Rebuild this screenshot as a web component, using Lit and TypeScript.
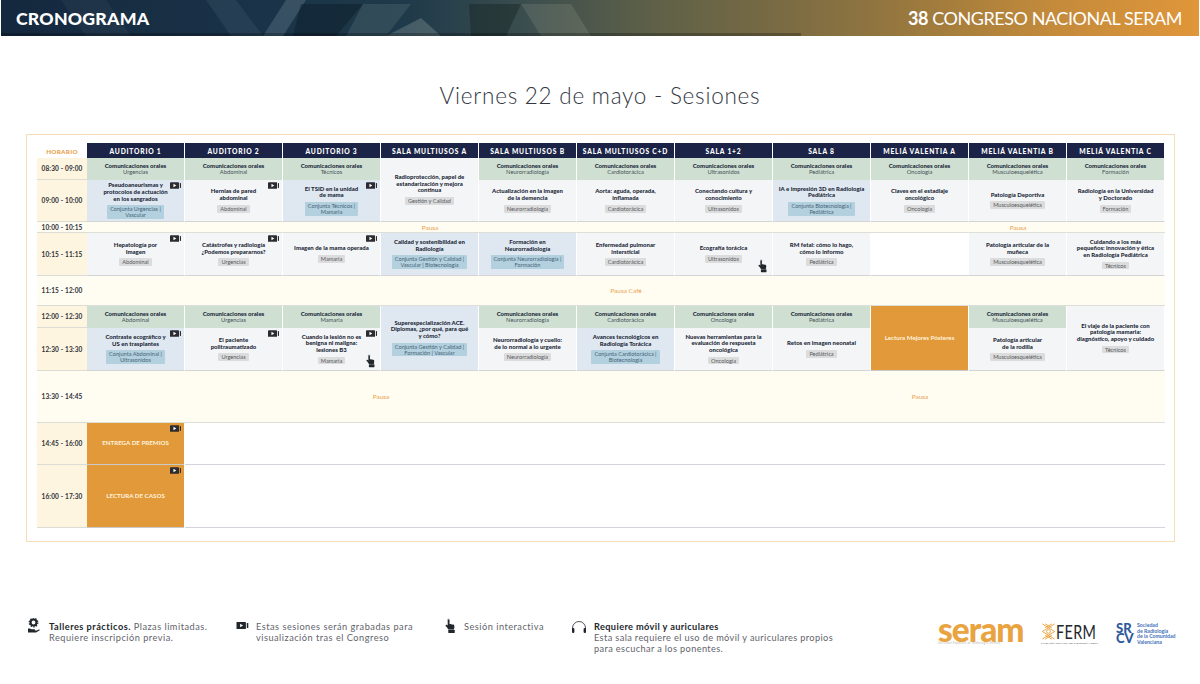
import { LitElement, html, css, svg } from "lit";
import { customElement } from "lit/decorators.js";

type Kind = "oral" | "blue" | "grey" | "orange" | "pause" | "empty";
interface Cell { c: number; r: number; cs?: number; rs?: number; k: Kind; t?: string; s?: string; cam?: boolean; hand?: boolean; }

const rooms = ["AUDITORIO 1","AUDITORIO 2","AUDITORIO 3","SALA MULTIUSOS A","SALA MULTIUSOS B","SALA MULTIUSOS C+D","SALA 1+2","SALA 8","MELIÁ VALENTIA A","MELIÁ VALENTIA B","MELIÁ VALENTIA C"];
const times = [
  ["08:30 - 09:00", 0],["09:00 - 10:00", 0],["10:00 - 10:15", 1],["10:15 - 11:15", 0],["11:15 - 12:00", 1],
  ["12:00 - 12:30", 0],["12:30 - 13:30", 0],["13:30 - 14:45", 1],["14:45 - 16:00", 0],["16:00 - 17:30", 0],
] as [string, number][];

const oral = (c: number, r: number, s: string): Cell => ({ c, r, k: "oral", t: "Comunicaciones orales", s });

const cells: Cell[] = [
  oral(1,1,"Urgencias"),oral(2,1,"Abdominal"),oral(3,1,"Técnicos"),
  {c:4,r:1,rs:2,k:"grey",t:"Radioprotección, papel de\nestandarización y mejora\ncontinua",s:"Gestión y Calidad"},
  oral(5,1,"Neurorradiología"),oral(6,1,"Cardiotorácica"),oral(7,1,"Ultrasonidos"),oral(8,1,"Pediátrica"),oral(9,1,"Oncología"),oral(10,1,"Musculoesquelética"),oral(11,1,"Formación"),
  {c:1,r:2,k:"blue",t:"Pseudoaneurismas y\nprotocolos de actuación\nen los sangrados",s:"Conjunta Urgencias |\nVascular",cam:true},
  {c:2,r:2,k:"grey",t:"Hernias de pared\nabdominal",s:"Abdominal",cam:true},
  {c:3,r:2,k:"blue",t:"El TSID en la unidad\nde mama",s:"Conjunta Técnicos |\nMamaria",cam:true},
  {c:5,r:2,k:"grey",t:"Actualización en la imagen\nde la demencia",s:"Neurorradiología"},
  {c:6,r:2,k:"grey",t:"Aorta: aguda, operada,\ninflamada",s:"Cardiotorácica"},
  {c:7,r:2,k:"grey",t:"Conectando cultura y\nconocimiento",s:"Ultrasonidos"},
  {c:8,r:2,k:"blue",t:"IA e impresión 3D en Radiología\nPediátrica",s:"Conjunta Biotecnología |\nPediátrica"},
  {c:9,r:2,k:"grey",t:"Claves en el estadiaje\noncológico",s:"Oncología"},
  {c:10,r:2,k:"grey",t:"Patología Deportiva",s:"Musculoesquelética"},
  {c:11,r:2,k:"grey",t:"Radiología en la Universidad\ny Doctorado",s:"Formación"},
  {c:1,r:3,cs:7,k:"pause",t:"Pausa"},
  {c:8,r:3,k:"pause"},
  {c:9,r:3,cs:3,k:"pause",t:"Pausa"},
  {c:1,r:4,k:"grey",t:"Hepatología por\nImagen",s:"Abdominal",cam:true},
  {c:2,r:4,k:"grey",t:"Catástrofes y radiología\n¿Podemos prepararnos?",s:"Urgencias",cam:true},
  {c:3,r:4,k:"grey",t:"Imagen de la mama operada",s:"Mamaria",cam:true},
  {c:4,r:4,k:"blue",t:"Calidad y sostenibilidad en\nRadiología",s:"Conjunta Gestión y Calidad |\nVascular | Biotecnología"},
  {c:5,r:4,k:"blue",t:"Formación en\nNeurorradiología",s:"Conjunta Neurorradiología |\nFormación"},
  {c:6,r:4,k:"grey",t:"Enfermedad pulmonar\nintersticial",s:"Cardiotorácica"},
  {c:7,r:4,k:"grey",t:"Ecografía torácica",s:"Ultrasonidos",hand:true},
  {c:8,r:4,k:"grey",t:"RM fetal: cómo lo hago,\ncómo lo informo",s:"Pediátrica"},
  {c:9,r:4,k:"empty"},
  {c:10,r:4,k:"grey",t:"Patología articular de la\nmuñeca",s:"Musculoesquelética"},
  {c:11,r:4,k:"grey",t:"Cuidando a los más\npequeños: innovación y ética\nen Radiología Pediátrica",s:"Técnicos"},
  {c:1,r:5,cs:11,k:"pause",t:"Pausa Café"},
  oral(1,6,"Abdominal"),oral(2,6,"Urgencias"),oral(3,6,"Mamaria"),
  {c:4,r:6,rs:2,k:"blue",t:"Superespecialización ACE.\nDiplomas, ¿por qué, para qué\ny cómo?",s:"Conjunta Gestión y Calidad |\nFormación | Vascular"},
  oral(5,6,"Neurorradiología"),oral(6,6,"Cardiotorácica"),oral(7,6,"Oncología"),oral(8,6,"Pediátrica"),
  {c:9,r:6,rs:2,k:"orange",t:"Lectura Mejores Pósteres"},
  oral(10,6,"Musculoesquelética"),
  {c:11,r:6,rs:2,k:"grey",t:"El viaje de la paciente con\npatología mamaria:\ndiagnóstico, apoyo y cuidado",s:"Técnicos"},
  {c:1,r:7,k:"blue",t:"Contraste ecográfico y\nUS en trasplantes",s:"Conjunta Abdominal |\nUltrasonidos",cam:true},
  {c:2,r:7,k:"grey",t:"El paciente\npolitraumatizado",s:"Urgencias",cam:true},
  {c:3,r:7,k:"grey",t:"Cuando la lesión no es\nbenigna ni maligna:\nlesiones B3",s:"Mamaria",cam:true,hand:true},
  {c:5,r:7,k:"grey",t:"Neurorradiología y cuello:\nde lo normal a lo urgente",s:"Neurorradiología"},
  {c:6,r:7,k:"blue",t:"Avances tecnológicos en\nRadiología Torácica",s:"Conjunta Cardiotorácica |\nBiotecnología"},
  {c:7,r:7,k:"grey",t:"Nuevas herramientas para la\nevaluación de respuesta\noncológica",s:"Oncología"},
  {c:8,r:7,k:"grey",t:"Retos en imagen neonatal",s:"Pediátrica"},
  {c:10,r:7,k:"grey",t:"Patología articular\nde la rodilla",s:"Musculoesquelética"},
  {c:1,r:8,cs:6,k:"pause",t:"Pausa"},
  {c:7,r:8,cs:5,k:"pause",t:"Pausa"},
  {c:1,r:9,k:"orange",t:"ENTREGA DE PREMIOS",cam:true},
  {c:2,r:9,cs:10,k:"empty"},
  {c:1,r:10,k:"orange",t:"LECTURA DE CASOS",cam:true},
  {c:2,r:10,cs:10,k:"empty"},
];

const camIcon = html`<svg class="camsvg" viewBox="0 0 12 7"><rect x="0" y="0" width="9.4" height="7" rx=".5" fill="#2b2b30"/><path d="M3.6 1.7 6.6 3.5 3.6 5.3Z" fill="#fff"/><rect x="10.3" y="1" width="1.5" height="5" fill="#2b2b30"/></svg>`;
const handPaths = svg`<circle cx="3.6" cy="1.7" r="1.5" fill="#c9ccd2"/><path d="M2.700 2.200c0-1 1.800-1 1.800 0v4.100c.5-.5 1.300-.4 1.600.1.500-.4 1.300-.3 1.600.3.600-.4 1.500-.1 1.600.7.200 1.200.1 2.800-.4 4H3.300C2.700 10 1.400 8.900.7 8 .2 7.300 1 6.300 1.900 6.800l.8.6Z" fill="#22272e"/><rect x="3.300" y="11.700" width="6.400" height="3.300" rx=".6" fill="#22272e"/>`;
const handIcon = html`<svg class="handsvg" viewBox="0 0 12 16">${handPaths}</svg>`;

@customElement("app-root")
export class AppRoot extends LitElement {
  static styles = css`
    :host { display: flex; flex-direction: column; width: 1200px; height: 684px; background: #fff; font-family: "Lato", "Noto Sans", sans-serif; color: #232a36; overflow: hidden; }
    .bar { position: relative; flex: none; height: 36px; margin: 0 1px; display: flex; align-items: center; justify-content: space-between; padding: 0 17px 0 15px; color: #fff; overflow: hidden;
      background: linear-gradient(90deg, #14283e 0%, #1a3348 22%, #1f3a4a 34%, #3c4e4e 44%, #5d6048 54%, #776a44 64%, #8d7340 72%, #a87f3c 80%, #c48b3b 88%, #e0963a 100%); }
    .shapes { position: absolute; inset: 0; width: 100%; height: 100%; }
    .bar span { position: relative; }
    .brand { font-size: 17.700px; font-weight: 900; letter-spacing: .2px; }
    .congress { font-size: 18px; font-weight: 400; letter-spacing: -.45px; }
    .congress b { font-weight: 700; }
    h1 { flex: none; margin: 0; height: 98px; padding-top: 47px; box-sizing: border-box; text-align: center; font-size: 22.500px; line-height: 26px; font-weight: 300; letter-spacing: .75px; color: #33383f; }
    .frame { flex: none; box-sizing: border-box; height: 408px; margin-left: 26px; width: 1149px; border: 1px solid #f6dcb8; padding: 8px 10px 0; }
    .grid { display: grid; grid-template-columns: 50px repeat(11, 98px); grid-template-rows: 15px 22px 42px 11px 43px 30px 22px 43px 52px 42px 63px; }
    .horario { display: flex; align-items: center; justify-content: center; font-size: 6.300px; font-weight: 900; color: #e9a04a; letter-spacing: .3px; padding-top: 1px; }
    .room { display: flex; align-items: center; justify-content: center; background: #1b2447; color: #fff; font-size: 6.700px; font-weight: 900; letter-spacing: .8px; margin-right: 1px; white-space: nowrap; }
    .time { display: flex; align-items: center; justify-content: center; font-size: 6.500px; font-weight: 700; color: #2d3138; background: #fdf5e0; border-bottom: 1px solid #dcdcd6; box-sizing: border-box; letter-spacing: .15px; }
    .time.light { background: #fffcf2; }
    .cell { position: relative; box-sizing: border-box; display: flex; flex-direction: column; align-items: center; justify-content: center; text-align: center; border-right: 1px solid #fff; min-width: 0; }
    .title { font-size: 6px; line-height: 6.700px; font-weight: 900; white-space: pre-line; color: #232a3a; }
    .tag { margin-top: 3px; padding: 1px 3px; font-size: 5.600px; line-height: 5.800px; white-space: pre-line; border-radius: 1px; background: #dcdcdc; color: #555a60; }
    .oral { background: #cfe0d3; }
    .oral .title { line-height: 6.500px; }
    .oral .sub { font-size: 5.800px; line-height: 6.500px; color: #465058; }
    .blue { background: #dfe8f1; border-bottom: 1px solid #d2d4d6; }
    .blue .tag { background: #b3d0de; color: #466478; }
    .grey { background: #f4f5f6; border-bottom: 1px solid #d2d4d6; }
    .orange { background: #e2993a; border-bottom: 1px solid #c9c9c9; border-right: none; margin-right: 1px; }
    .orange .title { color: #fff3dc; font-size: 6.200px; font-weight: 700; }
    .pause { background: #fffcf2; border-right: none; border-bottom: 1px solid #dedfd8; font-size: 6.500px; color: #eba24d; }
    .empty { background: #fff; border-right: none; border-bottom: 1px solid #d3d5dc; }
    .cam { position: absolute; top: 1.500px; right: 3px; line-height: 0; }
    .camsvg { width: 11.500px; height: 7px; display: block; }
    .hand { position: absolute; right: 4px; bottom: 2.500px; line-height: 0; }
    .handsvg { width: 10.500px; height: 14px; display: block; }
    .legend { flex: none; display: flex; margin-top: 76px; padding-left: 27px; font-size: 9.200px; line-height: 11px; letter-spacing: .5px; color: #5f646b; }
    .item { flex: none; display: flex; align-items: flex-start; }
    .i1 { width: 209px; } .i2 { width: 209px; } .i3 { width: 126px; } .i4 { width: 367px; letter-spacing: .38px; }
    .ico { flex: none; display: flex; justify-content: flex-start; }
    .item b { color: #22262c; font-weight: 700; }
    .i1 .ico { width: 22px; } .i2 .ico { width: 20px; padding-top: 4px; } .i3 .ico { width: 19px; } .i4 .ico { width: 23px; padding-top: 3px; }
    .txt { padding-top: 2.500px; white-space: pre-line; }
    .logos { display: flex; align-items: flex-start; letter-spacing: 0; }
    .seram { width: 103px; color: #e9a33f; height: 28px; position: relative; }
    .seram .big { font-size: 33.500px; line-height: 20px; height: 22px; font-weight: 900; letter-spacing: -1px; margin-top: 1px; }
    .micro { font-size: 2.800px; line-height: 3px; letter-spacing: .1px; color: #b9b3a6; white-space: nowrap; }
    .seram .micro { letter-spacing: .33px; margin-top: 1px; }
    .ferm { width: 75px; display: flex; flex-wrap: wrap; margin-top: 5px; }
    .ferm svg { flex: none; }
    .ferm .big { width: 41px; font-size: 20px; line-height: 17px; font-weight: 400; letter-spacing: .5px; color: #23262b; transform: scaleX(.72); transform-origin: left center; white-space: nowrap; }
    .ferm .micro { width: 56px; color: #555; margin-top: 2px; font-size: 2.300px; }
    .srcv { display: flex; gap: 4px; color: #2c5a9c; margin-top: 5px; }
    .srcv .mark { font-size: 13px; line-height: 10px; font-weight: 900; letter-spacing: 0; width: 17px; }
    .srcv .name { font-size: 5.200px; line-height: 5.600px; font-weight: 700; letter-spacing: 0; white-space: pre-line; color: #3f72b8; }
  `;

  private cell(c: Cell) {
    const place = `grid-column:${c.c + 1} / span ${c.cs ?? 1};grid-row:${c.r + 1} / span ${c.rs ?? 1}`;
    if (c.k === "pause") return html`<div class="cell pause" style=${place}>${c.t}</div>`;
    if (c.k === "empty") return html`<div class="cell empty" style=${place}></div>`;
    if (c.k === "oral") return html`<div class="cell oral" style=${place}><div class="title">${c.t}</div><div class="sub">${c.s}</div></div>`;
    return html`<div class="cell ${c.k}" style=${place}>
      <div class="title">${c.t}</div>
      ${c.s ? html`<div class="tag">${c.s}</div>` : ""}
      ${c.cam ? html`<div class="cam">${camIcon}</div>` : ""}
      ${c.hand ? html`<div class="hand">${handIcon}</div>` : ""}
    </div>`;
  }

  render() {
    return html`
      <header class="bar">
        <svg class="shapes" viewBox="0 0 1198 36" preserveAspectRatio="none">
          ${svg`<path d="M60 0 85 36H130L105 0Z" fill="#fff" opacity=".04"/>
          <path d="M205 0 230 36H262L235 0Z" fill="#8fb0c4" opacity=".1"/>
          <path d="M262 36 285 0H305L282 36Z" fill="#9ab4c0" opacity=".22"/>
          <path d="M300 4H362L335 36H292Z" fill="#0b1a26" opacity=".45"/>
          <path d="M362 4 345 36H385L410 4Z" fill="#a9bcb8" opacity=".14"/>
          <path d="M468 4H520L505 36H470Z" fill="#14201f" opacity=".4"/>
          <path d="M385 36 420 18 440 36Z" fill="#cfd6cc" opacity=".22"/>
          <path d="M520 4H570L590 36H540Z" fill="#e2dfc8" opacity=".12"/>
          <path d="M0 33H800V36H0Z" fill="#000" opacity=".25"/>`}
        </svg>
        <span class="brand">CRONOGRAMA</span>
        <span class="congress"><b>38</b> CONGRESO NACIONAL SERAM</span>
      </header>
      <h1>Viernes 22 de mayo - Sesiones</h1>
      <section class="frame">
        <div class="grid">
          <div class="horario">HORARIO</div>
          ${rooms.map(r => html`<div class="room">${r}</div>`)}
          ${times.map((t, i) => html`<div class="time ${t[1] ? "light" : ""}" style="grid-column:1;grid-row:${i + 2}">${t[0]}</div>`)}
          ${cells.map(c => this.cell(c))}
        </div>
      </section>
      <footer class="legend">
        <div class="item i1">
          <span class="ico"><svg width="13" height="16" viewBox="0 0 13 16">
            <circle cx="6.500" cy="4.500" r="2.900" fill="none" stroke="#22272e" stroke-width="2"/>
            <circle cx="6.500" cy="4.500" r="4.300" fill="none" stroke="#22272e" stroke-width="1.200" stroke-dasharray="1.500 1.200"/>
            <path d="M1 10.500h1.800l1.700.8h3c1 0 1 1.400 0 1.400H5.800l3.900-.2 2-1c.9-.3 1.300.6.700 1.100L9 14.600H1Z" fill="#22272e"/>
          </svg></span>
          <div class="txt"><b>Talleres prácticos.</b> Plazas limitadas.
Requiere inscripción previa.</div>
        </div>
        <div class="item i2">
          <span class="ico"><svg width="13" height="7" viewBox="0 0 12 7"><rect width="9.400" height="7" rx=".5" fill="#22272e"/><path d="M3.600 1.700 6.600 3.500 3.600 5.300Z" fill="#fff"/><rect x="10.300" y="1" width="1.500" height="5" fill="#22272e"/></svg></span>
          <div class="txt">Estas sesiones serán grabadas para
visualización tras el Congreso</div>
        </div>
        <div class="item i3">
          <span class="ico"><svg width="12" height="16" viewBox="0 0 12 16">${handPaths}</svg></span>
          <div class="txt">Sesión interactiva</div>
        </div>
        <div class="item i4">
          <span class="ico"><svg width="16" height="12" viewBox="0 0 16 12"><path d="M1.500 8V7a6.500 6.500 0 0 1 13 0v1" fill="none" stroke="#22272e" stroke-width=".8"/><rect x="1" y="7" width="2.400" height="5" rx="1" fill="#22272e"/><rect x="12.600" y="7" width="2.400" height="5" rx="1" fill="#22272e"/></svg></span>
          <div class="txt"><b>Requiere móvil y auriculares</b>
Esta sala requiere el uso de móvil y auriculares propios
para escuchar a los ponentes.</div>
        </div>
        <div class="logos">
          <div class="seram"><div class="big">seram</div><div class="micro">Sociedad Española de Radiología Médica</div></div>
          <div class="ferm">
            <svg width="15" height="17" viewBox="0 0 15 18" fill="none" stroke="#e9a33f" stroke-width="1"><path d="M1 1 14 9 1 17M14 1 1 9 14 17M4 1 11 5M11 1 4 5M4 13 11 17M11 13 4 17"/><circle cx="7.500" cy="9" r="2"/></svg>
            <div class="big">FERM</div>
            <div class="micro">FUNDACIÓN ESPAÑOLA DE RADIOLOGÍA MÉDICA</div>
          </div>
          <div class="srcv">
            <div class="mark">SR<br/>CV</div>
            <div class="name">Sociedad
de Radiología
de la Comunidad
Valenciana</div>
          </div>
        </div>
      </footer>
    `;
  }
}
